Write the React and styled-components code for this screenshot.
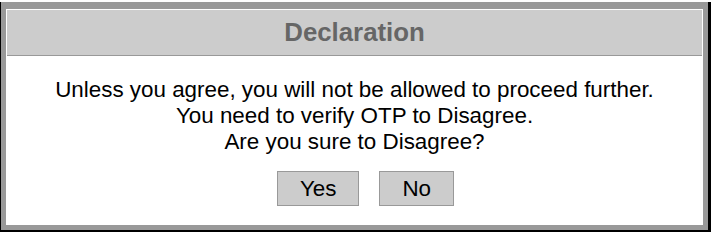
import React from "react";
import styled, { createGlobalStyle } from "styled-components";

const Global = createGlobalStyle`
  html, body { margin: 0; padding: 0; background: #fff; }
  body { font-family: "Liberation Sans", Arial, sans-serif; }
`;

const Frame = styled.div`
  margin-top: 2px;
  width: 711px;
  height: 230px;
  box-sizing: border-box;
  background: #999;
  border-left: 1px solid #000;
  border-right: 3px solid #000;
  border-bottom: 2px solid #000;
  padding: 7px 5px 5px 5px;
  display: flex;
`;

const Dialog = styled.div`
  flex: 1;
  border: 1px solid #fff;
  background: #fff;
  display: flex;
  flex-direction: column;
`;

const Header = styled.div`
  height: 45px;
  background: #ccc;
  border-bottom: 1px solid #999;
  display: flex;
  align-items: center;
  justify-content: center;
  font-size: 25.8px;
  font-weight: bold;
  color: #666;
`;

const Body = styled.div`
  flex: 1;
  padding-top: 21px;
  display: flex;
  flex-direction: column;
  align-items: center;
  font-size: 22.4px;
  color: #000;
  text-align: center;
`;

const Message = styled.p`
  margin: 0;
  line-height: 26px;
`;

const Actions = styled.div`
  margin-top: 16px;
  margin-left: 22px;
  display: flex;
  gap: 20px;
`;

const Button = styled.button`
  height: 35px;
  padding: 0 22px;
  background: #ccc;
  border: 1px solid #999;
  font-family: "Liberation Sans", Arial, sans-serif;
  font-size: 22.4px;
  color: #000;
  cursor: pointer;
`;

export default function App() {
  return (
    <>
      <Global />
      <Frame>
        <Dialog>
          <Header>Declaration</Header>
          <Body>
            <Message>
              Unless you agree, you will not be allowed to proceed further.
              <br />
              You need to verify OTP to Disagree.
              <br />
              Are you sure to Disagree?
            </Message>
            <Actions>
              <Button>Yes</Button>
              <Button>No</Button>
            </Actions>
          </Body>
        </Dialog>
      </Frame>
    </>
  );
}
